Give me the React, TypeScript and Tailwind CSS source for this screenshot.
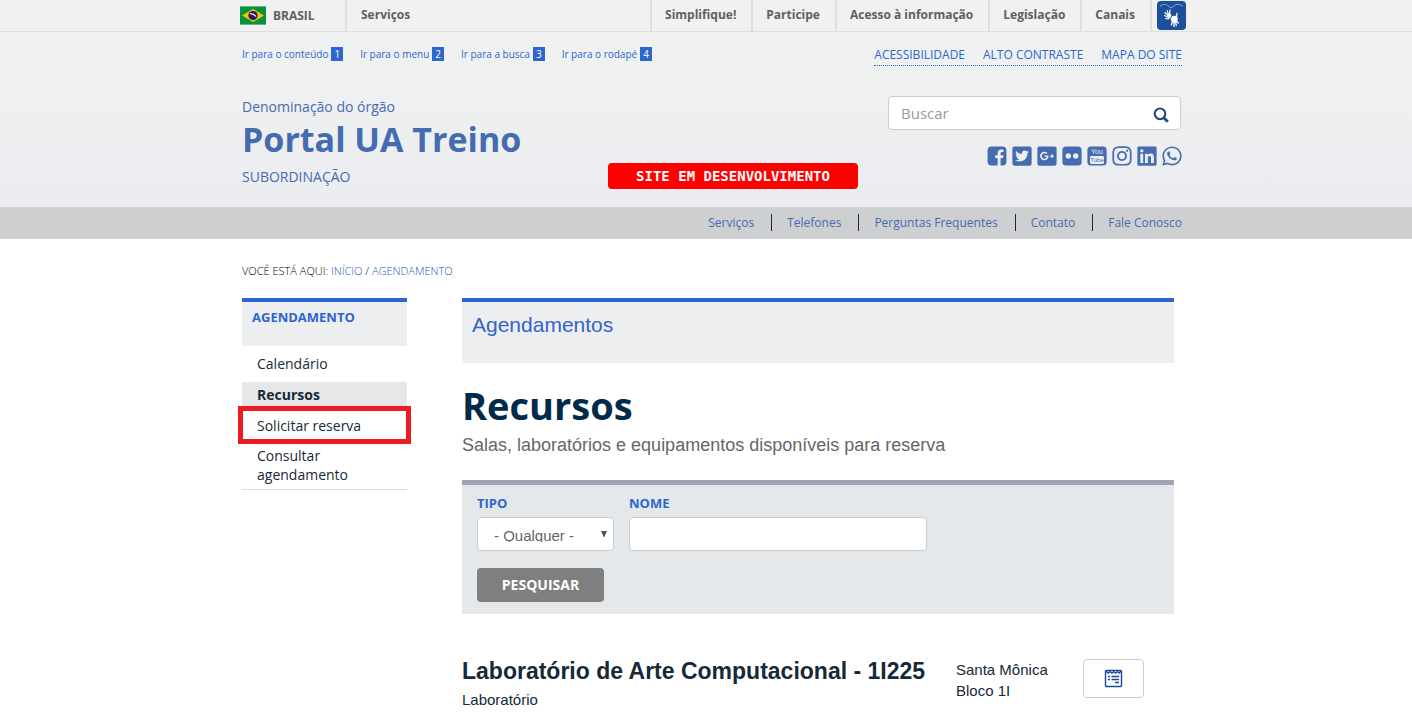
import React from "react";
import {
  FaFlickr,
  FaGooglePlusSquare,
  FaInstagram,
  FaLinkedin,
  FaTwitterSquare,
  FaWhatsapp,
} from "react-icons/fa";

const barLinks = ["Simplifique!", "Participe", "Acesso à informação", "Legislação", "Canais"];
const skipLinks = [
  { label: "Ir para o conteúdo", key: "1" },
  { label: "Ir para o menu", key: "2" },
  { label: "Ir para a busca", key: "3" },
  { label: "Ir para o rodapé", key: "4" },
];
const siteActions = ["Acessibilidade", "Alto Contraste", "Mapa do Site"];
const portalLinks = ["Serviços", "Telefones", "Perguntas Frequentes", "Contato", "Fale Conosco"];

function BrazilFlag() {
  return (
    <svg viewBox="0 0 26 19" className="h-[19px] w-[26px]" aria-hidden="true">
      <rect width="26" height="19" fill="#0a9140" />
      <path d="M0 .5H26M0 18.5H26" stroke="#5cb584" strokeWidth="1" />
      <path d="M2 9.5 13 3 24 9.5 13 16Z" fill="#f8c300" />
      <circle cx="13" cy="9.5" r="4.6" fill="#28166f" />
      <path d="M10 7.800C12.500 7.500 14.500 8.600 16 10.500" stroke="#fff" strokeWidth="1.200" fill="none" />
    </svg>
  );
}

function HandsIcon() {
  return (
    <svg viewBox="0 0 29 29" className="h-[29px] w-[29px]" aria-hidden="true">
      <rect width="29" height="29" rx="4" fill="#1c4f9c" />
      <path d="M3 5.500C6 2.500 9 3 11.500 5.200L14 7 16.500 5.200C19 3 23 2.500 26 5.500" stroke="#8fb0de" strokeWidth="1" fill="none" />
      <g stroke="#fff" strokeLinecap="round" fill="none">
        <path d="M10.500 14 8 11.500M11.300 13 10.200 9.500M12.600 13 13 9M10.500 16 7.500 14.500M11 18 8.500 17.500" strokeWidth="1.200" />
        <path d="M19.500 20 21.200 22M18.500 21 19.300 24.500M17 21 17 25.500M15.500 20.500 14.300 24M19.500 16.500 20 12.500" strokeWidth="1.300" />
      </g>
      <path d="M10 13.500 13.500 12.500 14.500 15 13 17 11 18.500Z" fill="#fff" />
      <path d="M13.500 18 15.500 15 19 14.800 21 17.500 19.500 21.500 15 21.500Z" fill="#fff" />
    </svg>
  );
}

function SearchIcon() {
  return (
    <svg viewBox="0 0 16 16" className="h-4 w-4" fill="none" stroke="currentColor" aria-hidden="true">
      <circle cx="7" cy="6.800" r="5.300" strokeWidth="2.200" />
      <path d="M10.800 10.800 14.800 14.800" strokeWidth="2.800" />
    </svg>
  );
}

function FacebookSquare() {
  return (
    <svg viewBox="-128 0 1792 1792" className="h-[22px] w-[22px]" fill="currentColor" aria-hidden="true">
      <path d="M1248 128q119 0 203.500 84.500t84.500 203.500v960q0 119-84.500 203.500t-203.500 84.500h-188v-595h199l30-232h-229v-148q0-56 23.500-84t91.500-28l122-1v-207q-63-9-178-9-136 0-217.500 80t-81.500 226v171h-200v232h200v595h-532q-119 0-203.500-84.500t-84.500-203.500v-960q0-119 84.500-203.500t203.500-84.500h960z" />
    </svg>
  );
}

function YoutubeSquare() {
  return (
    <svg viewBox="0 0 22 22" className="h-[22px] w-[22px]" aria-hidden="true">
      <rect x="1.400" y="1.400" width="19.200" height="19.200" rx="3.600" fill="currentColor" />
      <rect x="4" y="11" width="14" height="8" rx="1.400" fill="#edeef0" />
      <text x="11" y="9" textAnchor="middle" fontSize="7" fill="#edeef0" fontFamily="Liberation Sans, sans-serif">
        You
      </text>
      <text x="11" y="17.200" textAnchor="middle" fontSize="6" fill="currentColor" fontFamily="Liberation Sans, sans-serif">
        Tube
      </text>
    </svg>
  );
}

function FlickrSquare() {
  return (
    <svg viewBox="0 0 22 22" className="h-[22px] w-[22px]" aria-hidden="true">
      <rect x="1.400" y="1.400" width="19.200" height="19.200" rx="3.600" fill="currentColor" />
      <circle cx="7.300" cy="11" r="2.700" fill="#edeef0" />
      <circle cx="14.700" cy="11" r="2.700" fill="#edeef0" />
    </svg>
  );
}

function NotepadIcon() {
  return (
    <svg viewBox="0 0 19 19" className="h-[19px] w-[19px]" fill="none" stroke="#1b479c" aria-hidden="true">
      <rect x="1.500" y="1.500" width="16" height="16" rx="1" strokeWidth="1.400" />
      <path d="M2 2 4 4.200 6 2.600 8 4.200 9.800 2.600 11.600 4.200 13.400 2.600 15.200 4.200 17 2" strokeWidth="1.200" />
      <path d="M4 7.500H6M7.500 7.500H15M4 10.500H6M7.500 10.500H15M11 13.500H15" strokeWidth="1.300" />
    </svg>
  );
}

const socials = [
  { name: "Facebook", icon: <FacebookSquare /> },
  { name: "Twitter", icon: <FaTwitterSquare /> },
  { name: "Google Plus", icon: <FaGooglePlusSquare /> },
  { name: "Flickr", icon: <FlickrSquare /> },
  { name: "YouTube", icon: <YoutubeSquare /> },
  { name: "Instagram", icon: <FaInstagram /> },
  { name: "LinkedIn", icon: <FaLinkedin /> },
  { name: "WhatsApp", icon: <FaWhatsapp /> },
];

function GovernmentBar() {
  return (
    <div className="border-b border-[#dfdfdf] bg-[#f1f1f1] text-xs font-bold text-[#606060]">
      <div className="mx-auto flex h-[31px] max-w-[952px] items-stretch pl-[10px]">
        <a href="#brasil" className="flex w-[105px] items-center gap-[7px]">
          <BrazilFlag />
          BRASIL
        </a>
        <a href="#servicos" className="flex flex-1 items-center border-l-2 border-[#dfdfdf] pb-[2px] pl-[14px]">
          Serviços
        </a>
        {barLinks.map((label) => (
          <a key={label} href="#barra" className="flex items-center border-l-2 border-[#dfdfdf] pr-[15px] pb-[2px] pl-[13px]">
            {label}
          </a>
        ))}
        <a href="#vlibras" aria-label="VLibras" className="-mr-1 flex items-center border-l-2 border-[#dfdfdf] pl-[5px]">
          <HandsIcon />
        </a>
      </div>
    </div>
  );
}

function Header() {
  return (
    <header className="bg-linear-to-b from-[#f0f2f1] to-[#ebecf0] text-[#456bb0]">
      <div className="mx-auto flex max-w-[952px] justify-between pl-3">
        <div>
          <nav className="flex gap-[17px] pt-[14px] text-[10px] leading-4 text-[#2c66ce]">
            {skipLinks.map((link) => (
              <a key={link.key} href="#pular" className="flex items-center gap-[3px]">
                {link.label}
                <span className="bg-[#2c66ce] px-[3px] leading-[14px] text-white">{link.key}</span>
              </a>
            ))}
          </nav>
          <a href="#inicio" className="mt-[35px] block">
            <span className="block text-sm leading-5">Denominação do órgão</span>
            <span className="block text-[34px] leading-11 font-bold">Portal UA Treino</span>
            <span className="mt-[6px] block text-sm leading-5">SUBORDINAÇÃO</span>
          </a>
        </div>
        <div className="flex h-[175px] flex-col items-end">
          <nav className="mt-[13px] flex gap-[18px] border-b border-dotted border-[#2c66ce] pb-px text-xs leading-[19px] text-[#2c66ce] uppercase">
            {siteActions.map((label) => (
              <a key={label} href="#acao">
                {label}
              </a>
            ))}
          </nav>
          <form className="mt-[30px] mr-px flex h-[34px] w-[293px] items-center rounded-[4px] border border-[#ccc] bg-white" onSubmit={(e) => e.preventDefault()}>
            <input aria-label="Buscar" placeholder="Buscar" className="min-w-0 flex-1 bg-transparent pl-3 text-[15px] text-[#555] outline-none placeholder:text-[#999]" />
            <button aria-label="Pesquisar no portal" className="px-[11px] pt-[3px] text-[#204a80]">
              <SearchIcon />
            </button>
          </form>
          <div className="mt-[15px] -mr-px flex gap-[3px] text-[22px]">
            {socials.map((s) => (
              <a key={s.name} href="#social" aria-label={s.name}>
                {s.icon}
              </a>
            ))}
          </div>
        </div>
      </div>
    </header>
  );
}

function PortalNav() {
  return (
    <nav className="bg-[#cecfd0] text-xs text-[#456bb0]">
      <div className="mx-auto flex h-8 max-w-[952px] items-start justify-end pt-[7px]">
        {portalLinks.map((label, i) => (
          <React.Fragment key={label}>
            {i > 0 && <span className="mr-[15px] ml-[17px] h-[17px] w-px bg-[#172938]" />}
            <a href="#portal" className="leading-[18px]">
              {label}
            </a>
          </React.Fragment>
        ))}
      </div>
    </nav>
  );
}

function Sidebar() {
  return (
    <aside className="w-[165px] shrink-0">
      <h2 className="h-12 border-t-4 border-[#2c66ce] bg-[#edeef0] px-[10px] pt-[6px] text-[13px] leading-[18px] font-bold text-[#2c66ce]">AGENDAMENTO</h2>
      <ul className="border-b border-[#dcdcdc] pt-[5px] text-sm leading-[19px] text-[#172938]">
        <li>
          <a href="#calendario" className="block px-[15px] pt-[3px] pb-[9px]">
            Calendário
          </a>
        </li>
        <li>
          <a href="#recursos" className="block bg-[#e6e7e9] px-[15px] pt-[3px] pb-[2px] font-bold">
            Recursos
          </a>
        </li>
        <li className="-mx-1 w-[173px] border-[5px] border-[#ed1c24]">
          <a href="#solicitar" className="block px-[14px] pt-[5px] pb-1">
            Solicitar reserva
          </a>
        </li>
        <li>
          <a href="#consultar" className="block px-[15px] pt-[2px] pb-[5px]">
            Consultar agendamento
          </a>
        </li>
      </ul>
    </aside>
  );
}

function SearchForm() {
  return (
    <form className="mt-[23px] border-t-[5px] border-[#9ea5b0] bg-[#e4e8eb] px-[15px] pt-[9px] pb-3" onSubmit={(e) => e.preventDefault()}>
      <div className="flex gap-[15px]">
        <div>
          <label htmlFor="tipo" className="mb-1 block text-[13px] leading-[19px] font-bold text-[#2c66ce]">
            TIPO
          </label>
          <div className="relative">
            <select id="tipo" className="block h-[34px] w-[137px] appearance-none rounded-[4px] border border-[#ccc] bg-white pt-[10px] pr-5 pb-2 pl-4 font-['Liberation_Sans',sans-serif] text-[15px] leading-4 text-[#666] outline-none">
              <option>- Qualquer -</option>
            </select>
            <svg viewBox="0 0 6 6" className="pointer-events-none absolute top-[14px] right-[7px] h-[6px] w-[6px]" aria-hidden="true">
              <path d="M0 0H6L3.400 6H2.600Z" fill="#555" />
            </svg>
          </div>
        </div>
        <div>
          <label htmlFor="nome" className="mb-1 block text-[13px] leading-[19px] font-bold text-[#2c66ce]">
            NOME
          </label>
          <input id="nome" className="block h-[34px] w-[298px] rounded-[4px] border border-[#ccc] bg-white px-3 text-sm outline-none" />
        </div>
      </div>
      <button className="mt-[17px] h-[34px] w-[127px] rounded-[4px] bg-[#7f7f7f] text-sm font-bold text-white">PESQUISAR</button>
    </form>
  );
}

export default function App() {
  return (
    <div className="relative min-h-screen overflow-hidden bg-white font-['Open_Sans',sans-serif] text-[#172938]">
      <GovernmentBar />
      <Header />
      <PortalNav />
      <div className="mx-auto max-w-[952px] pl-3">
        <p className="pt-6 text-[11px] leading-4 font-light text-black">
          VOCÊ ESTÁ AQUI:{" "}
          <a href="#inicio" className="text-[#1a55b8]">
            INÍCIO
          </a>{" "}
          /{" "}
          <a href="#agendamento" className="text-[#1a55b8]">
            AGENDAMENTO
          </a>
        </p>
        <div className="mt-[19px] flex items-start gap-[55px]">
          <Sidebar />
          <main className="mr-2 min-w-0 flex-1 font-['Liberation_Sans',sans-serif]">
            <div className="h-[65px] border-t-4 border-[#2c66ce] bg-[#edeef0] px-[10px] pt-[9px] text-[21px] leading-7 text-[#3463ca]">Agendamentos</div>
            <h1 className="mt-4 font-['Open_Sans',sans-serif] text-[38px] leading-[52px] font-bold text-[#002a4a]">Recursos</h1>
            <p className="mt-[2px] text-lg leading-6 text-[#666]">Salas, laboratórios e equipamentos disponíveis para reserva</p>
            <div className="font-['Open_Sans',sans-serif]">
              <SearchForm />
            </div>
            <div className="mt-[43px] flex items-start">
              <div className="flex-1">
                <h2 className="text-[23px] leading-7 font-bold">Laboratório de Arte Computacional - 1I225</h2>
                <p className="mt-1 text-[15px] leading-[21px]">Laboratório</p>
              </div>
              <p className="mt-[2px] w-[127px] text-[15px] leading-[21px]">
                Santa Mônica
                <br />
                Bloco 1I
              </p>
              <button aria-label="Ver agenda" className="mt-[2px] mr-[30px] flex h-[39px] w-[61px] items-center justify-center rounded-[4px] border border-[#ccc] bg-white">
                <NotepadIcon />
              </button>
            </div>
          </main>
        </div>
      </div>
      <div role="status" className="absolute top-[163px] left-1/2 -ml-[98px] flex h-[26px] w-[250px] items-center justify-center rounded-[4px] bg-[#f00] font-['DejaVu_Sans_Mono',monospace] text-sm font-bold text-white">
        SITE EM DESENVOLVIMENTO
      </div>
    </div>
  );
}
